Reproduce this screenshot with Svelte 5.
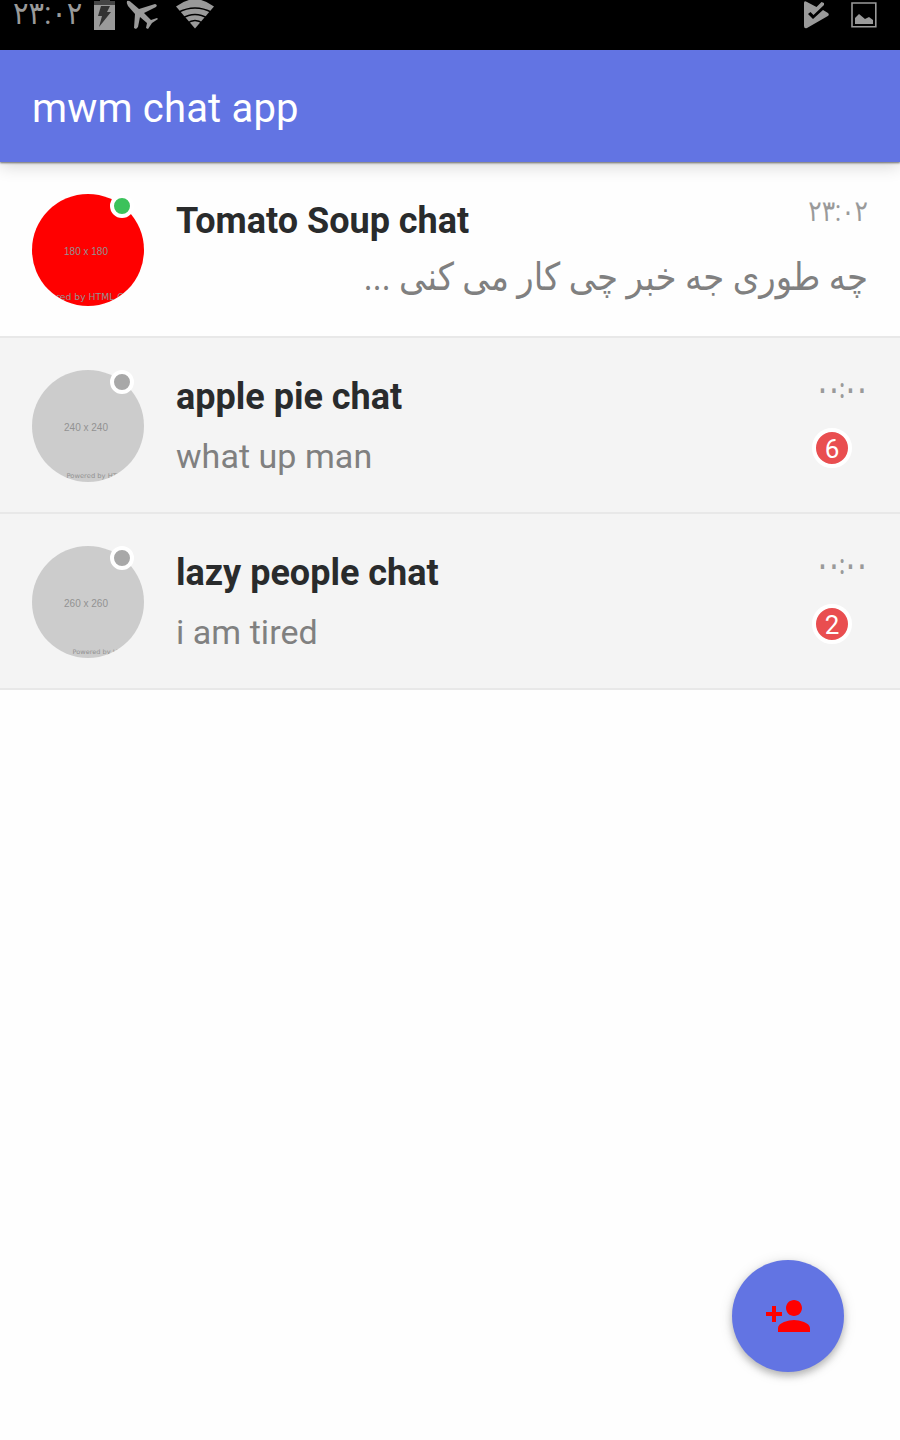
<script>
  const chats = [
    { name: 'Tomato Soup chat', message: 'چه طوری جه خبر چی کار می کنی ...', rtl: true, time: '۲۳:۰۲', online: true, size: '180 x 180', credit: 'Powered by HTML.COM', creditX: 0, creditY: 106, creditSize: 9, creditWidth: 107, unread: 0 },
    { name: 'apple pie chat', message: 'what up man', rtl: false, time: '۰۰:۰۰', online: false, size: '240 x 240', credit: 'Powered by HTML.COM', creditX: 34.5, creditY: 107.5, creditSize: 6.6, creditWidth: 78, unread: 6 },
    { name: 'lazy people chat', message: 'i am tired', rtl: false, time: '۰۰:۰۰', online: false, size: '260 x 260', credit: 'Powered by HTML.COM', creditX: 40.5, creditY: 108, creditSize: 6.2, creditWidth: 76, unread: 2 }
  ];
</script>

<div class="screen">
  <div class="status">
    <div class="left">
      <span class="clock">۲۳:۰۲</span>
      <svg class="battery" width="22" height="30" viewBox="0 0 22 30">
        <path fill="#454545" d="M6 0h10v1h5v5H0V1h6z" />
        <path fill="#9a9a9a" d="M0 5h21v25H0z" />
        <path fill="#333" d="M7 6h9l-3 6h4L5 27l3-11H4z" />
      </svg>
      <svg class="plane" width="34" height="31" viewBox="0 0 34 31">
        <path fill="#9a9a9a" d="M1 1Q3 0 6 3L13 9L29 4Q32 5 30 7L18 13L25 20L31 18L32 19L26 23L22 29L20 28L21 23L14 17L12 27L10 29L8 28L9 14L2 6Q0 3 1 1Z" />
      </svg>
      <svg class="wifi" width="40" height="30" viewBox="0 0 40 30">
        <path fill="#9a9a9a" d="M20 28.5L1 6.5Q20-8 39 6.5Z" />
        <g fill="none" stroke="#000" stroke-width="1.5">
          <path d="M3 12.5Q20 3.5 37 12.5M7 18.5Q20 10.5 33 18.5M12 23.5Q20 17.5 28 23.5" />
        </g>
      </svg>
    </div>
    <div class="right">
      <svg width="28" height="30" viewBox="0 0 28 30">
        <path fill="#9a9a9a" d="M1 3Q1 0 4 2L13.5 7L18.5 2L21 3V5L10.5 15L7.5 12L5 14L10 19L20 10L25 13Q27 15 24 16.5L4 28Q1 29 1 26Z" />
      </svg>
      <svg width="26" height="26" viewBox="0 0 26 26">
        <path fill="none" stroke="#9a9a9a" stroke-width="1.6" d="M1 1h23.8v23.8H1z" />
        <path fill="#9a9a9a" d="M4 22v-6l4-4 6 5 4-2 4 3v4z" />
      </svg>
    </div>
  </div>

  <header><h1>mwm chat app</h1></header>

  <main>
    {#each chats as chat}
      <div class="row" class:unread={chat.unread > 0}>
        <div class="avatar" class:online={chat.online}>
          <svg width="112" height="112" viewBox="0 0 112 112">
            <text x="32" y="61" font-size="11" textLength="44" lengthAdjust="spacingAndGlyphs">{chat.size}</text>
            <text class="credit" x={chat.creditX} y={chat.creditY} font-size={chat.creditSize} textLength={chat.creditWidth} lengthAdjust="spacingAndGlyphs">{chat.credit}</text>
          </svg>
          <i class="presence"></i>
        </div>
        <div class="body">
          <div class="line">
            <h2>{chat.name}</h2>
            <time class:midnight={chat.time === '۰۰:۰۰'}>{chat.time}</time>
          </div>
          <div class="line second">
            <p class:rtl={chat.rtl} dir={chat.rtl ? 'rtl' : 'ltr'}>{chat.message}</p>
            {#if chat.unread}
              <span class="count">{chat.unread}</span>
            {/if}
          </div>
        </div>
      </div>
    {/each}
  </main>

  <button class="fab" aria-label="Add contact">
    <svg width="48" height="48" viewBox="0 0 24 24">
      <path fill="#f00" d="M15 12c2.21 0 4-1.79 4-4s-1.79-4-4-4-4 1.79-4 4 1.79 4 4 4zm-9-2V7H4v3H1v2h3v3h2v-3h3v-2H6zm9 4c-2.67 0-8 1.34-8 4v2h16v-2c0-2.66-5.33-4-8-4z" />
    </svg>
  </button>
</div>

<style>
  :global(body) { margin: 0; }
  .screen {
    position: relative;
    width: 900px;
    height: 1440px;
    overflow: hidden;
    background: #fefefe;
    font-family: Roboto, 'DejaVu Sans', sans-serif;
  }
  .status {
    box-sizing: border-box;
    height: 50px;
    display: flex;
    justify-content: space-between;
    padding: 0 23px 0 13px;
    background: #000;
    color: #9a9a9a;
  }
  .left, .right { display: flex; align-items: flex-start; }
  .clock {
    width: 81px;
    font-size: 29px;
    line-height: 27px;
    white-space: nowrap;
    transform: scaleY(1.1);
    transform-origin: left center;
  }
  .plane { margin-left: 10px; }
  .wifi { margin-left: 15px; }
  .right { gap: 20px; }
  .right svg:last-child { margin-top: 2px; }
  header {
    position: relative;
    box-sizing: border-box;
    height: 112px;
    display: flex;
    align-items: center;
    padding: 6px 32px 0;
    background: #6274e3;
    box-shadow: 0 1px 2px rgba(0, 0, 0, .55), 0 4px 16px rgba(0, 0, 0, .16);
  }
  h1, h2, p { margin: 0; white-space: nowrap; }
  h1 { color: #fff; font-size: 40px; font-weight: 400; line-height: 48px; letter-spacing: .18px; }
  .row {
    box-sizing: border-box;
    height: 176px;
    display: flex;
    gap: 32px;
    padding: 32px 32px 30px;
    border-bottom: 2px solid #e8e8e8;
  }
  .row.unread { background: #f4f4f4; }
  .avatar {
    position: relative;
    flex: none;
    width: 112px;
    height: 112px;
    border-radius: 50%;
    background: #ccc;
  }
  .avatar.online { background: #f00; }
  .avatar svg { display: block; border-radius: 50%; overflow: hidden; }
  .avatar text { fill: #929292; font-family: 'Liberation Sans', sans-serif; }
  .avatar .credit { font-family: 'DejaVu Sans', sans-serif; }
  .presence {
    position: absolute;
    top: 0;
    right: 10px;
    width: 16px;
    height: 16px;
    border: 4px solid #fff;
    border-radius: 50%;
    background: #a8a8a8;
  }
  .online .presence { background: #3bc25b; }
  .body { flex: 1; display: flex; flex-direction: column; }
  .line { display: flex; justify-content: space-between; height: 56px; }
  h2 { padding-top: 5px; color: #292b2c; font-size: 36px; font-weight: 700; line-height: 44px; }
  time {
    height: 36px;
    color: #9a9a9a;
    font-size: 25px;
    line-height: 36px;
    transform: scaleY(1.15);
    transform-origin: right center;
  }
  time.midnight {
    font-size: 27px;
    font-weight: 700;
    line-height: 38px;
    transform: scaleX(.69);
  }
  p { padding-top: 8px; color: #808080; font-size: 34px; line-height: 44px; letter-spacing: .05px; }
  p.rtl {
    width: 100%;
    height: 44px;
    font-size: 34px;
    letter-spacing: 0;
    padding-top: 4px;
    transform: scaleY(1.12);
    transform-origin: right center;
  }
  .count {
    box-sizing: border-box;
    width: 40px;
    height: 40px;
    margin: 2px 16px 0 0;
    border: 4px solid #fff;
    border-radius: 50%;
    background: #e94e50;
    color: #fff;
    font-size: 26px;
    line-height: 34px;
    text-align: center;
  }
  .fab {
    position: absolute;
    right: 56px;
    bottom: 68px;
    width: 112px;
    height: 112px;
    display: flex;
    align-items: center;
    justify-content: center;
    padding: 0;
    border: 0;
    border-radius: 50%;
    background: #6274e3;
    box-shadow: 0 4px 7px rgba(0, 0, 0, .22), 0 2px 14px rgba(0, 0, 0, .13);
  }
</style>
